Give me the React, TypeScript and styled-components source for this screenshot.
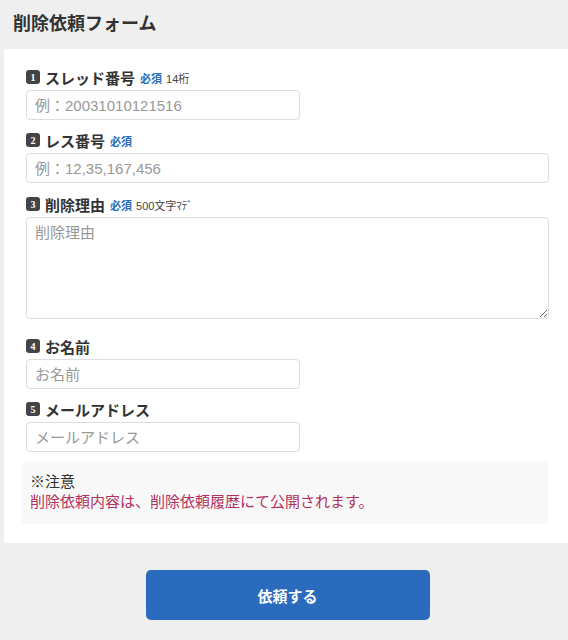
import React from 'react';
import styled, { createGlobalStyle } from 'styled-components';

const GlobalStyle = createGlobalStyle`
  html, body {
    margin: 0;
    padding: 0;
    background: #efefef;
    font-family: "Liberation Sans", "Noto Sans CJK JP", sans-serif;
    color: #333;
  }
`;

interface IField {
  no: number;
  label: string;
  required?: boolean;
  note?: string;
  placeholder: string;
  wide?: boolean;
  multiline?: boolean;
}

const fields: IField[] = [
  { no: 1, label: 'スレッド番号', required: true, note: '14桁', placeholder: '例：20031010121516' },
  { no: 2, label: 'レス番号', required: true, placeholder: '例：12,35,167,456', wide: true },
  { no: 3, label: '削除理由', required: true, note: '500文字ﾏﾃﾞ', placeholder: '削除理由', wide: true, multiline: true },
  { no: 4, label: 'お名前', placeholder: 'お名前' },
  { no: 5, label: 'メールアドレス', placeholder: 'メールアドレス' },
];

export default function App() {
  return (
    <Page>
      <GlobalStyle />
      <Title>削除依頼フォーム</Title>
      <Panel>
        {fields.map(field => (
          <Field key={field.no} $multiline={field.multiline}>
            <Label>
              <Badge>{field.no}</Badge>
              <LabelText>{field.label}</LabelText>
              {field.required && <Required>必須</Required>}
              {field.note && <Note>{field.note}</Note>}
            </Label>
            {field.multiline ? (
              <TextArea placeholder={field.placeholder} />
            ) : (
              <Input type="text" placeholder={field.placeholder} $wide={field.wide} />
            )}
          </Field>
        ))}
        <Caution>
          <CautionTitle>※注意</CautionTitle>
          <CautionText>削除依頼内容は、削除依頼履歴にて公開されます。</CautionText>
        </Caution>
      </Panel>
      <Footer>
        <SubmitButton type="button">依頼する</SubmitButton>
      </Footer>
    </Page>
  );
}

const Page = styled.div`
  width: 568px;
  min-height: 640px;
  overflow: hidden;
`;

const Title = styled.h1`
  margin: 0;
  padding: 12px 13px;
  font-size: 18px;
  line-height: 25px;
  font-weight: bold;
  color: #333;
`;

const Panel = styled.div`
  margin-left: 4px;
  background: #fff;
  padding: 18px 20px 19px 18px;
`;

const Field = styled.div<{ $multiline?: boolean }>`
  display: flex;
  flex-direction: column;
  align-items: flex-start;
  padding: 0 0 0 4px;
  margin-bottom: ${p => (p.$multiline ? '17px' : '10px')};

  &:nth-child(2) {
    margin-bottom: 11px;
  }
`;

const Label = styled.div`
  display: flex;
  align-items: center;
  height: 20px;
  margin-bottom: 3px;
`;

const Badge = styled.span`
  display: inline-flex;
  align-items: center;
  justify-content: center;
  flex-shrink: 0;
  width: 14px;
  height: 14px;
  border-radius: 3px;
  background: #444;
  color: #fff;
  font-family: "Liberation Serif", serif;
  font-size: 10px;
  font-weight: bold;
  margin-right: 5px;
`;

const LabelText = styled.span`
  font-size: 15px;
  font-weight: bold;
  color: #333;
`;

const Required = styled.span`
  font-size: 11px;
  font-weight: bold;
  color: #2a6bb8;
  margin-left: 5px;
  margin-top: 2px;
`;

const Note = styled.span`
  font-size: 11px;
  color: #444;
  margin-left: 4px;
  margin-top: 2px;
`;

const Input = styled.input<{ $wide?: boolean }>`
  box-sizing: border-box;
  width: ${p => (p.$wide ? '523px' : '274px')};
  height: 30px;
  border: 1px solid #ddd;
  border-radius: 4px;
  padding: 0 8px;
  font-family: "Liberation Sans", "Noto Sans CJK JP", sans-serif;
  font-size: 15px;
  color: #333;
  outline: none;

  &::placeholder {
    color: #999;
  }
`;

const TextArea = styled.textarea`
  box-sizing: border-box;
  width: 523px;
  height: 102px;
  border: 1px solid #ddd;
  border-radius: 4px;
  padding: 3px 8px;
  font-family: "Liberation Sans", "Noto Sans CJK JP", sans-serif;
  font-size: 15px;
  color: #333;
  outline: none;
  display: block;

  &::placeholder {
    color: #999;
  }
`;

const Caution = styled.div`
  margin-top: 2px;
  background: #f8f8f8;
  border-radius: 3px;
  padding: 10px 8px 12px;
  width: 526px;
  box-sizing: border-box;
`;

const CautionTitle = styled.div`
  font-size: 15px;
  line-height: 20px;
  color: #333;
`;

const CautionText = styled.div`
  font-size: 15px;
  line-height: 20px;
  color: #b2325e;
`;

const Footer = styled.div`
  display: flex;
  justify-content: center;
  padding: 27px 0 20px 7px;
`;

const SubmitButton = styled.button`
  width: 284px;
  height: 50px;
  border: none;
  border-radius: 5px;
  background: #2a6bbd;
  color: #fff;
  font-family: "Liberation Sans", "Noto Sans CJK JP", sans-serif;
  font-size: 15px;
  font-weight: bold;
  cursor: pointer;
`;
